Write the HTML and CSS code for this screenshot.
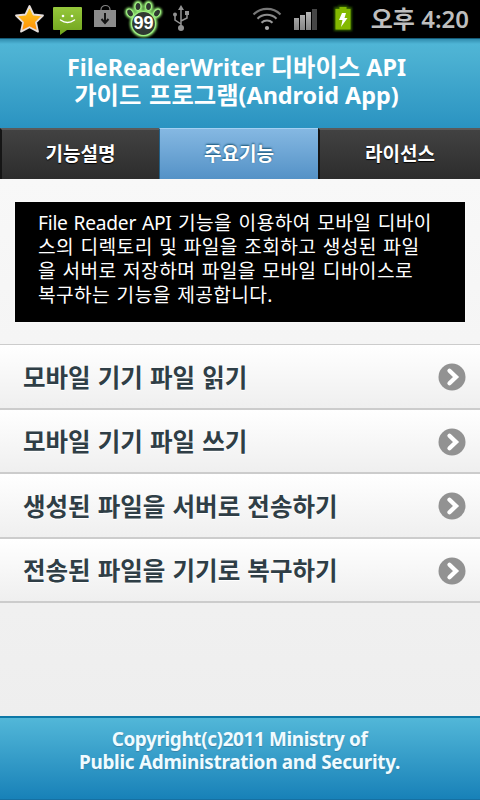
FILE: index.html
```html
<!DOCTYPE html>
<html lang="ko">
<head>
<meta charset="utf-8">
<title>FileReaderWriter</title>
<link rel="stylesheet" href="styles.css">
</head>
<body>
<div class="status">
  <svg class="icons" width="480" height="41" viewBox="0 0 480 41">
    <defs>
      <linearGradient id="gold" x1="0" y1="0" x2="0" y2="1"><stop offset="0" stop-color="#ffd21e"/><stop offset="1" stop-color="#ff8a08"/></linearGradient>
      <linearGradient id="lime" x1="0" y1="0" x2="0" y2="1"><stop offset="0" stop-color="#96c83c"/><stop offset="1" stop-color="#6fa31c"/></linearGradient>
      <linearGradient id="grey" x1="0" y1="0" x2="0" y2="1"><stop offset="0" stop-color="#b5b5b5"/><stop offset="1" stop-color="#858585"/></linearGradient>
      <filter id="glow" x="-30%" y="-30%" width="160%" height="160%"><feGaussianBlur stdDeviation="1"/></filter>
    </defs>
    <path d="M29.500 6l4 8.500 9.500 1-7 6.800 2 9.300-8.500-4.400-8.500 4.400 2-9.300-7-6.800 9.500-1z" fill="url(#gold)" stroke="#e6dedb" stroke-width="1.800" stroke-linejoin="round"/>
    <path d="M54 7h27q1 0 1 1v21q0 1-1 1H67l-7 5v-5h-6q-1 0-1-1V8q0-1 1-1z" fill="url(#lime)"/>
    <circle cx="63" cy="16" r="1.300" fill="#fff"/><circle cx="72" cy="16" r="1.300" fill="#fff"/>
    <path d="M60.500 20q7 5 14 0" fill="none" stroke="#fff" stroke-width="1.500" stroke-linecap="round"/>
    <path d="M101 10.500V9.500a4.500 4 0 0 1 9 0v1" fill="none" stroke="#858585" stroke-width="1.200"/>
    <path d="M94 10h22v17H94z" fill="#8c8c8c"/>
    <path d="M105 13v9M101.500 19l3.500 4 3.500-4" fill="none" stroke="#151515" stroke-width="2"/>
    <g fill="#8ee66e" stroke="#8ee66e" stroke-width="3.500" filter="url(#glow)"><ellipse cx="130" cy="13" rx="3" ry="4" transform="rotate(-35 130 13)"/><ellipse cx="138" cy="6.500" rx="3.200" ry="4.300"/><ellipse cx="148.500" cy="6.500" rx="3.200" ry="4.300"/><ellipse cx="157" cy="13" rx="3" ry="4" transform="rotate(35 157 13)"/><circle cx="143.500" cy="23.500" r="12"/></g>
    <g fill="#303832" stroke="#a0ef83" stroke-width="1.200"><ellipse cx="130" cy="13" rx="3" ry="4.200" transform="rotate(-35 130 13)"/><ellipse cx="138" cy="6.500" rx="3" ry="4.200"/><ellipse cx="148.500" cy="6.500" rx="3" ry="4.200"/><ellipse cx="157" cy="13" rx="3" ry="4.200" transform="rotate(35 157 13)"/><circle cx="143.500" cy="23.500" r="12"/></g>
    <text x="143.500" y="29" class="badge">99</text>
    <g fill="none" stroke="#929292" stroke-width="1.500"><path d="M181 9v18M181 24l-6-4v-5M181 21l6-3v-5"/></g>
    <g fill="#929292"><circle cx="181" cy="28" r="3"/><path d="M178 10l3-5 3 5z"/><circle cx="175" cy="14.500" r="2"/><path d="M185 11h4v4h-4z"/></g>
    <g fill="none" stroke="#777" stroke-width="2.100"><path d="M253.500 14.500a19 19 0 0 1 27 0"/><path d="M257.500 18.700a13.500 13.500 0 0 1 19 0" stroke="#8c8c8c"/><path d="M261.500 22.700a8 8 0 0 1 11 0" stroke="#999"/></g>
    <circle cx="267" cy="28" r="2.100" fill="#aaa"/>
    <g fill="url(#grey)"><path d="M294 18h5v12h-5zM300 15h5v15h-5zM306 12h5v18h-5z"/><path d="M312 9h5v21h-5z" fill="#464646"/></g>
    <path d="M335 8h4V6.500h8V8h4v22h-16z" fill="#4d8500" stroke="#2c5400" stroke-width="2" filter="url(#glow)"/>
    <path d="M335.500 9h4V7h7v2h4v20.500h-15z" fill="#83b900"/>
    <path d="M342 13h4l-1.500 5h3l-6.500 9 1.500-7H339z" fill="#fff"/>
  </svg>
  <div class="clock">오후 4:20</div>
</div>
<header class="title">
  <div>FileReaderWriter <span class="ko">디바이스</span> API</div>
  <div><span class="ko">가이드 프로그램</span>(Android App)</div>
</header>
<nav class="tabs">
  <div class="tab">기능설명</div>
  <div class="tab active">주요기능</div>
  <div class="tab">라이선스</div>
</nav>
<main>
  <div class="desc">
    <div><span class="latin">File Reader API</span> 기능을 이용하여 모바일 디바이</div>
    <div>스의 디렉토리 및 파일을 조회하고 생성된 파일</div>
    <div>을 서버로 저장하며 파일을 모바일 디바이스로</div>
    <div>복구하는 기능을 제공합니다.</div>
  </div>
  <div class="list">
    <div class="row"><span>모바일 기기 파일 읽기</span><svg width="28" height="28" viewBox="0 0 28 28"><circle cx="14" cy="14" r="13.500" fill="#929292"/><path d="M11.500 7.800l6.500 6.200-6.500 6.200" class="chev"/></svg></div>
    <div class="row"><span>모바일 기기 파일 쓰기</span><svg width="28" height="28" viewBox="0 0 28 28"><circle cx="14" cy="14" r="13.500" fill="#929292"/><path d="M11.500 7.800l6.500 6.200-6.500 6.200" class="chev"/></svg></div>
    <div class="row"><span>생성된 파일을 서버로 전송하기</span><svg width="28" height="28" viewBox="0 0 28 28"><circle cx="14" cy="14" r="13.500" fill="#929292"/><path d="M11.500 7.800l6.500 6.200-6.500 6.200" class="chev"/></svg></div>
    <div class="row"><span>전송된 파일을 기기로 복구하기</span><svg width="28" height="28" viewBox="0 0 28 28"><circle cx="14" cy="14" r="13.500" fill="#929292"/><path d="M11.500 7.800l6.500 6.200-6.500 6.200" class="chev"/></svg></div>
  </div>
</main>
<footer class="foot">
  <div class="tight">Copyright(c)2011 Ministry of</div>
  <div>Public Administration and Security.</div>
</footer>
</body>
</html>
```
FILE: styles.css
```css
* { box-sizing: border-box; }
body {
  margin: 0; width: 480px; height: 800px; overflow: hidden;
  display: flex; flex-direction: column;
  font-family: "Noto Sans", "Noto Sans CJK KR", sans-serif;
  background: #eee;
}
.status { position: relative; height: 38px; flex: none; background: #000; display: flex; justify-content: flex-end; }
.icons { position: absolute; left: 0; top: 0; }
.badge { font: bold 18px "Liberation Sans", sans-serif; fill: #fff; text-anchor: middle; }
.clock { padding-right: 11px; font-size: 24px; font-weight: 600; line-height: 38px; color: #bebebe; white-space: nowrap; }
.title {
  height: 90px; flex: none; padding: 14px 7px 0 0; text-align: center; color: #fff;
  font-size: 23.400px; font-weight: 700; line-height: 28px; white-space: nowrap;
  border-top: 1px solid #145b78;
  background: linear-gradient(#318daf 0, #4fb5d6 5px, #4db2d3 15px, #2a93c1 100%);
}
.title div { height: 28px; }
.ko { font-size: 24.300px; word-spacing: 1.500px; }
.tabs { height: 51px; flex: none; display: grid; grid-template-columns: 159px 159px 162px; }
.tab {
  text-align: center; color: #fff; font-size: 19px; font-weight: 700; line-height: 49px;
  border-left: 2px solid #151515; border-top: 2px solid #5a5a5a;
  background: linear-gradient(#424242, #2c2c2c);
  text-shadow: 0 1px 1px #000;
}
.active {
  border-left: 1px solid #235f85; border-top: 1px solid #a4d0f2; line-height: 51px;
  background: linear-gradient(#85b8e2, #5391c6);
  text-shadow: 0 -1px 2px #145072;
}
main { flex: 1; background: linear-gradient(#f8f8f8, #eee); padding-top: 23px; }
.desc {
  margin: 0 15px; height: 120px; background: #000; color: #fff; padding: 9px 0 0 23px;
  font-size: 19.200px; line-height: 24px; letter-spacing: 0.380px; word-spacing: 1.100px;
  white-space: nowrap; box-shadow: 0 0 3px #fff;
}
.latin { letter-spacing: -0.250px; }
.list { margin-top: 22px; border-top: 1px solid #ccc; }
.row {
  height: 64.500px; display: flex; align-items: center; justify-content: space-between;
  padding: 0 14.500px 0 23px; border-bottom: 2px solid #ccc;
  background: linear-gradient(#fff, #efefef);
  color: #2f3e46; font-size: 24.500px; font-weight: 700; word-spacing: 0.800px; white-space: nowrap;
  text-shadow: 0 1px 0 #fff;
}
.row svg { margin-top: 2px; }
.chev { fill: none; stroke: #fff; stroke-width: 4.300; stroke-linecap: round; stroke-linejoin: miter; }
.foot {
  height: 84px; flex: none; padding: 10px 1px 0 0; text-align: center; color: #f0fbff;
  font-size: 18.900px; font-weight: 700; line-height: 23px; letter-spacing: -0.270px; white-space: nowrap;
  border-top: 2px solid #0d78a7; border-bottom: 1px solid #1670a2;
  background: linear-gradient(#52b7d8, #1881b8);
  text-shadow: 0 1px 1px #3883a8;
}
.tight { letter-spacing: -0.360px; }
```
